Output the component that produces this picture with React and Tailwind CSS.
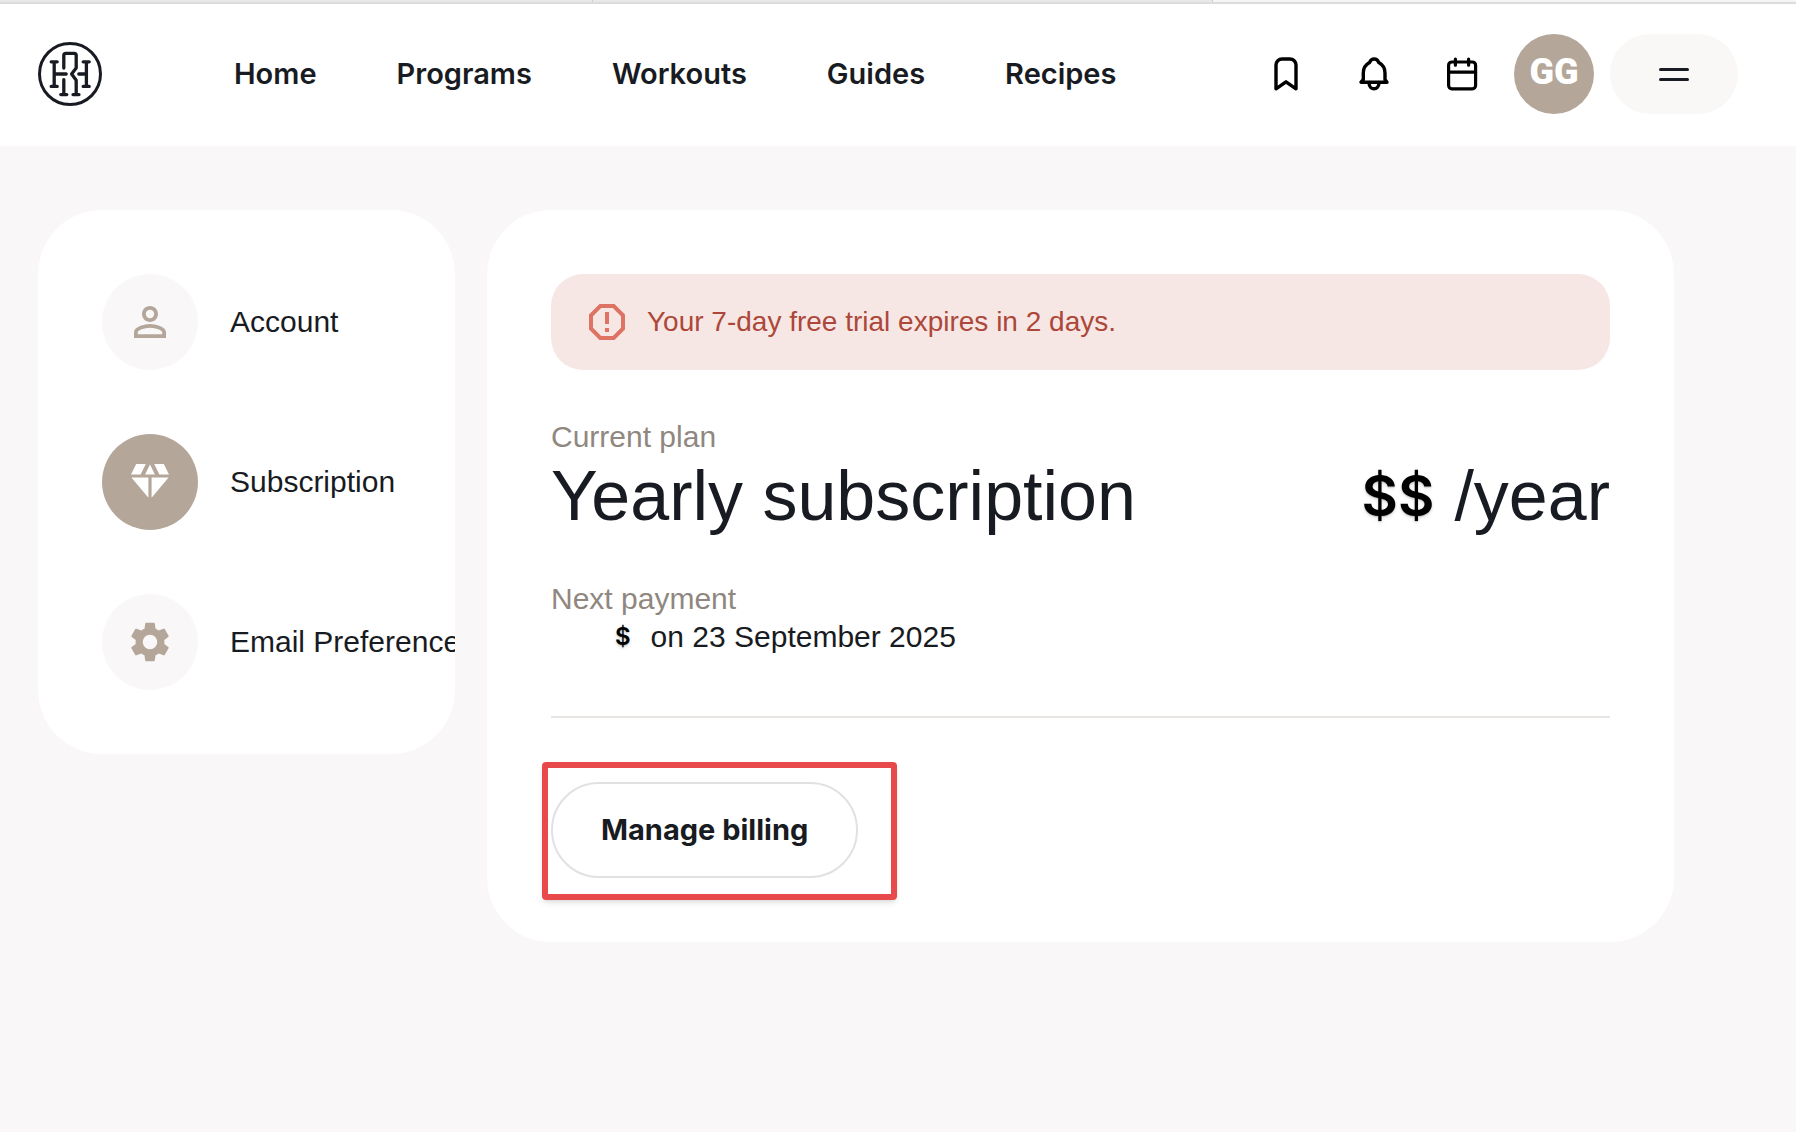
import React from "react";

const navLinks = ["Home", "Programs", "Workouts", "Guides", "Recipes"];

function Logo() {
  return (
    <svg viewBox="0 0 64 64" className="size-16" fill="none" stroke="#181b21" strokeLinecap="round" strokeLinejoin="round" aria-hidden="true">
      <circle cx="32" cy="32" r="30.500" strokeWidth="3" />
      <g strokeWidth="3.300">
        <path d="M13.200 19.800h6M13.200 44.400h6M16.200 19.800v24.600M16.200 32h12" />
        <path d="M45.200 19.800h6M45.200 44.400h6M48.400 19.800v24.600M48.400 32h-7.600" />
        <path d="M25.800 26V13.400a2 2 0 0 1 2-2h8.400a2 2 0 0 1 2 2V26l-4.600 6 4.600 6.200v14.400M35 52.600h6" />
        <path d="M25.800 37.600v15M22.800 52.600h6" />
      </g>
    </svg>
  );
}

function BookmarkIcon() {
  return (
    <svg viewBox="0 0 40 40" className="size-10" fill="none" stroke="#000" strokeWidth="3.400" strokeLinejoin="round" aria-hidden="true">
      <path d="M10 34.800V11a6 6 0 0 1 6-6h8a6 6 0 0 1 6 6v23.800l-10-7z" />
    </svg>
  );
}

function BellIcon() {
  return (
    <svg viewBox="0 0 40 40" className="size-10" fill="none" stroke="#000" strokeWidth="3.400" strokeLinecap="round" strokeLinejoin="round" aria-hidden="true">
      <path d="M7 28.200h26l-2-2.700v-6.500c0-4.600-2.200-8.200-6.200-10.400C24 6.400 22.600 5 20.200 5s-3.900 1.400-4.700 3.600C11.500 10.800 9.300 14.400 9.300 19v6.500z" />
      <path d="M15.200 28.500v1.500a4.800 4.800 0 0 0 9.600 0v-1.500" />
    </svg>
  );
}

function CalendarIcon() {
  return (
    <svg viewBox="0 0 40 40" className="size-10" fill="none" stroke="#000" strokeWidth="3.200" strokeLinecap="round" strokeLinejoin="round" aria-hidden="true">
      <rect x="6.600" y="8" width="27" height="26.800" rx="3.200" />
      <path d="M6.600 18.200h27M13.400 5v6.200M26.600 5v6.200" />
    </svg>
  );
}

function PersonIcon() {
  return (
    <svg viewBox="0 0 24 24" className="size-12" fill="#b4a699" aria-hidden="true">
      <path d="M12 5.900a2.100 2.100 0 1 1 0 4.200 2.100 2.100 0 0 1 0-4.200m0 9c2.970 0 6.100 1.460 6.100 2.100v1.100H5.900V17c0-.64 3.130-2.100 6.100-2.100M12 4C9.790 4 8 5.790 8 8s1.790 4 4 4 4-1.790 4-4-1.790-4-4-4m0 9c-2.670 0-8 1.340-8 4v3h16v-3c0-2.660-5.330-4-8-4" />
    </svg>
  );
}

function DiamondIcon() {
  return (
    <svg viewBox="0 0 48 48" className="size-12" fill="#fff" aria-hidden="true">
      <path d="M10.200 6h9.600l-5.200 10.400H5zM24 6.600l4.900 9.800h-9.800zM28.200 6h9.600L43 16.400h-9.600zM5.400 19.500h17v20.300zM25.600 19.500h17l-17 20.300z" />
    </svg>
  );
}

function GearIcon() {
  return (
    <svg viewBox="0 0 24 24" className="size-12" fill="#b4a699" aria-hidden="true">
      <path d="M19.140 12.940c.04-.3.06-.61.06-.94 0-.32-.02-.64-.07-.94l2.030-1.580a.49.49 0 0 0 .12-.61l-1.920-3.320a.488.488 0 0 0-.59-.22l-2.390.96c-.5-.38-1.030-.7-1.620-.94l-.36-2.540a.484.484 0 0 0-.48-.41h-3.840c-.24 0-.43.17-.47.41l-.36 2.540c-.59.24-1.130.57-1.620.94l-2.390-.96c-.22-.08-.47 0-.59.22L2.740 8.870c-.12.21-.08.47.12.61l2.030 1.580c-.05.3-.09.63-.09.94s.02.64.07.94l-2.030 1.580a.49.49 0 0 0-.12.61l1.920 3.320c.12.22.37.29.59.22l2.390-.96c.5.38 1.030.7 1.620.94l.36 2.540c.05.24.24.41.48.41h3.840c.24 0 .44-.17.47-.41l.36-2.540c.59-.24 1.130-.56 1.620-.94l2.390.96c.22.08.47 0 .59-.22l1.920-3.320c.12-.22.07-.47-.12-.61zM12 15.600c-1.980 0-3.600-1.620-3.600-3.600s1.620-3.600 3.600-3.600 3.600 1.620 3.600 3.600-1.620 3.600-3.600 3.600" />
    </svg>
  );
}

function AlertIcon() {
  return (
    <svg viewBox="0 0 24 24" className="size-12 shrink-0" fill="#de7263" aria-hidden="true">
      <path d="M15.730 3H8.270L3 8.270v7.460L8.270 21h7.460L21 15.730V8.270zM19 14.900 14.900 19H9.100L5 14.900V9.100L9.100 5h5.800L19 9.100zM11 15h2v2h-2zM11 7h2v6h-2z" />
    </svg>
  );
}

const sections = [
  { label: "Account", Icon: PersonIcon, active: false },
  { label: "Subscription", Icon: DiamondIcon, active: true },
  { label: "Email Preferences", Icon: GearIcon, active: false },
];

export default function App() {
  return (
    <div className="min-h-screen bg-[#f9f7f8] font-['Liberation_Sans',sans-serif] text-[30px] leading-[38px] text-[#181b21]">
      <div className="flex h-1 border-b-2 border-[#dcdcdc] bg-[#e8e8e8]" aria-hidden="true">
        <div className="w-[33%] border-r border-[#cfcfcf]" />
        <div className="w-[620px] border-r border-[#cfcfcf]" />
        <div className="flex-1 bg-[#f5f5f5]" />
      </div>

      <header className="flex items-center bg-white pt-[30px] pr-[58px] pb-8 pl-[38px]">
        <a href="#" aria-label="Homepage">
          <Logo />
        </a>
        <nav className="ml-[132px] flex gap-20 font-['Inter',sans-serif] text-[29px] font-semibold">
          {navLinks.map((label) => (
            <a key={label} href="#">
              {label}
            </a>
          ))}
        </nav>
        <div className="ml-auto flex items-center gap-12">
          <button type="button" aria-label="Bookmarks"><BookmarkIcon /></button>
          <button type="button" aria-label="Notifications"><BellIcon /></button>
          <button type="button" aria-label="Calendar"><CalendarIcon /></button>
        </div>
        <button type="button" className="ml-8 flex size-20 items-center justify-center rounded-full bg-[#b4a699] pb-1 font-['Roboto',sans-serif] text-4xl font-black text-white">
          GG
        </button>
        <button type="button" aria-label="Menu" className="ml-4 flex h-20 w-32 flex-col items-center justify-center gap-[7px] rounded-full bg-[#f9f8f7]">
          <span className="h-[3px] w-[30px] rounded-xs bg-[#181b21]" />
          <span className="h-[3px] w-[30px] rounded-xs bg-[#181b21]" />
        </button>
      </header>

      <div className="flex items-start gap-8 pt-16 pr-[122px] pb-16 pl-[38px]">
        <aside className="w-[417px] shrink-0 overflow-hidden rounded-[64px] bg-white p-16">
          <ul className="flex flex-col gap-16">
            {sections.map(({ label, Icon, active }) => (
              <li key={label}>
                <a href="#" className="flex items-center gap-8 whitespace-nowrap" aria-current={active ? "page" : undefined}>
                  <span className={active ? "flex size-24 shrink-0 items-center justify-center rounded-full bg-[#b4a699]" : "flex size-24 shrink-0 items-center justify-center rounded-full bg-[#f9f7f8]"}>
                    <Icon />
                  </span>
                  {label}
                </a>
              </li>
            ))}
          </ul>
        </aside>

        <main className="min-w-0 flex-1 rounded-[64px] bg-white p-16">
          <div role="alert" className="flex h-24 items-center gap-4 rounded-[32px] bg-[#f7e7e4] px-8 text-[28px] text-[#ac473a]">
            <AlertIcon />
            Your 7-day free trial expires in 2 days.
          </div>

          <section className="mt-12">
            <p className="text-[#8f8780]">Current plan</p>
            <div className="flex items-center justify-between text-[70px] leading-[80px]">
              <h1>Yearly subscription</h1>
              <p className="flex items-center gap-5">
                <span className="font-['Inter',sans-serif] text-[56px] font-semibold text-black text-shadow-md">$$</span>
                /year
              </p>
            </div>
          </section>

          <section className="mt-11">
            <p className="text-[#8f8780]">Next payment</p>
            <p className="flex items-center gap-5 pl-16">
              <span className="font-['Inter',sans-serif] text-2xl font-semibold text-black text-shadow-md">$</span>
              on 23 September 2025
            </p>
          </section>

          <hr className="mt-15 border-t-2 border-[#e8e4e1]" />

          <div className="relative mt-16 flex">
            <button type="button" className="h-24 rounded-full border-2 border-[#e1e1e1] px-12 font-['Inter',sans-serif] text-[29px] font-bold">
              Manage billing
            </button>
            <div className="pointer-events-none absolute -top-5 -left-[9px] h-[138px] w-[355px] rounded-sm border-6 border-[#e8494a] shadow-md" />
          </div>
        </main>
      </div>
    </div>
  );
}
